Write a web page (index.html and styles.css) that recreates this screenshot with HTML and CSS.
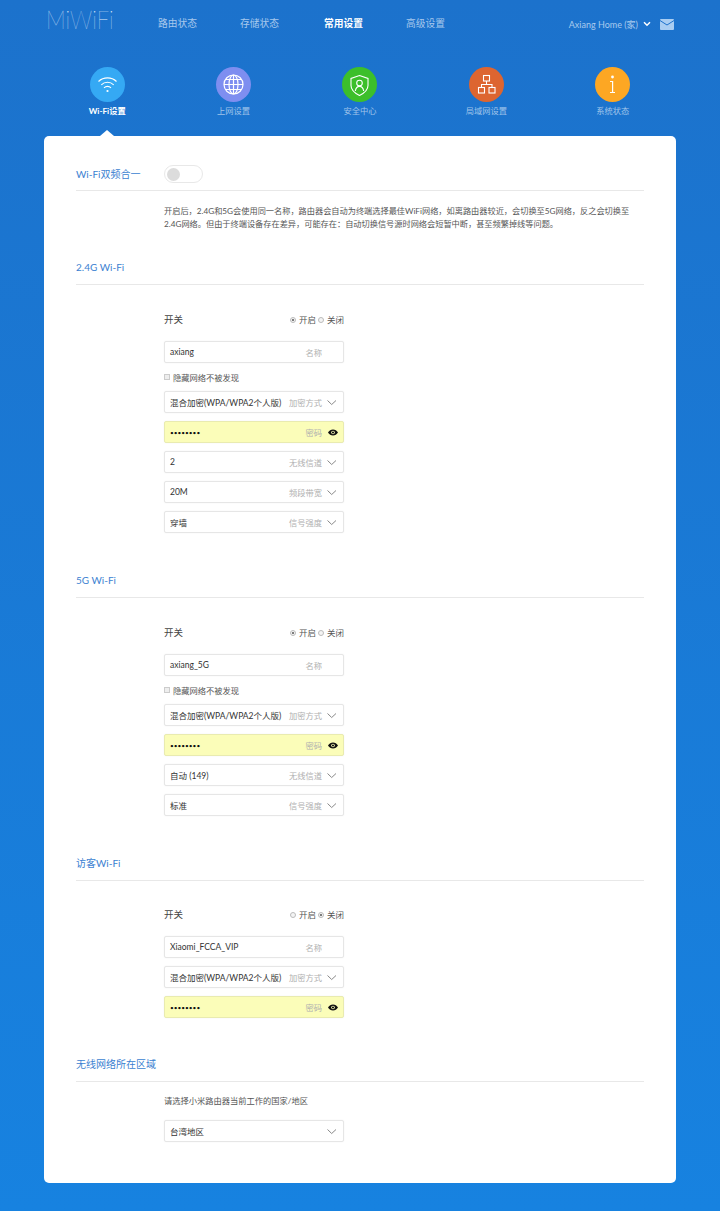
FILE: index.html
```html
<!DOCTYPE html>
<html lang="zh">
<head>
<meta charset="utf-8">
<title>MiWiFi</title>
<link rel="stylesheet" href="styles.css">
</head>
<body>
<header class="topbar">
  <div class="logo"><span>MiWiFi</span></div>
  <nav class="nav">
    <a>路由状态</a><a>存储状态</a><a class="active">常用设置</a><a>高级设置</a>
  </nav>
  <div class="user">
    <span>Axiang Home (家)</span>
    <svg class="user-chev" viewBox="0 0 8 6"><path d="M1 1.2 4 4.2 7 1.2" fill="none" stroke="#fff" stroke-width="1.5"/></svg>
    <svg class="mail" viewBox="0 0 14 11"><rect width="14" height="11" rx="1" fill="#a9cdf2"/><path d="M0 1.5 7 6 14 1.5" fill="none" stroke="#1c72cc" stroke-width="1"/></svg>
  </div>
</header>

<div class="tabs">
  <div class="tab current">
    <span class="disc c-wifi"><svg viewBox="0 0 35 35" fill="none" stroke="#fff" stroke-width="1.1"><path d="M8.5 14.5a13 13 0 0 1 18 0M11.3 17.8a9 9 0 0 1 12.4 0M14 20.8a5 5 0 0 1 7 0"/><circle cx="17.5" cy="24" r="1.1" fill="#fff" stroke="none"/></svg></span>
    <span class="tab-label">Wi-Fi设置</span>
  </div>
  <div class="tab">
    <span class="disc c-net"><svg viewBox="0 0 35 35" fill="none" stroke="#fff" stroke-width="1.2"><circle cx="17.5" cy="17.5" r="9.5"/><ellipse cx="17.5" cy="17.5" rx="4.5" ry="9.5"/><path d="M17.5 8v19M8 17.5h19M9.5 12.5h16M9.5 22.500h16"/></svg></span>
    <span class="tab-label">上网设置</span>
  </div>
  <div class="tab">
    <span class="disc c-sec"><svg viewBox="0 0 35 35" fill="none" stroke="#fff" stroke-width="1.1"><path d="M17.5 8.5 26 11.500v7c0 4.800-3.500 7.500-8.500 10-5-2.500-8.500-5.200-8.500-10v-7z"/><circle cx="17.5" cy="16" r="2.800"/><path d="M13.300 24c.6-3 2.200-4.600 4.200-4.600s3.600 1.600 4.200 4.600"/></svg></span>
    <span class="tab-label">安全中心</span>
  </div>
  <div class="tab">
    <span class="disc c-lan"><svg viewBox="0 0 35 35" fill="none" stroke="#fff" stroke-width="1.1"><rect x="14.500" y="8.500" width="6" height="5.500"/><rect x="9.500" y="20.500" width="6" height="5.500"/><rect x="20" y="20.500" width="6" height="5.500"/><path d="M17.500 14v3.500M12.500 20.500v-3h10.500v3"/></svg></span>
    <span class="tab-label">局域网设置</span>
  </div>
  <div class="tab">
    <span class="disc c-info"><svg viewBox="0 0 35 35" fill="#fff"><circle cx="17.500" cy="10" r="1.400"/><path d="M15 14h3.200v11h1.800v1.100h-5V25h2v-9.900h-2z"/></svg></span>
    <span class="tab-label">系统状态</span>
  </div>
</div>

<main class="card">
  <section class="head head-first">
    <h2 class="title">Wi-Fi双频合一</h2>
    <span class="toggle"><span class="knob"></span></span>
  </section>
  <p class="desc">开启后，2.4G和5G会使用同一名称，路由器会自动为终端选择最佳WiFi网络，如离路由器较近，会切换至5G网络，反之会切换至2.4G网络。但由于终端设备存在差异，可能存在：自动切换信号源时网络会短暂中断，甚至频繁掉线等问题。</p>

  <section class="head head-24"><h2 class="title">2.4G Wi-Fi</h2></section>
  <form class="form">
    <div class="switch-row"><span>开关</span><span class="radios"><i class="radio on"></i><span>开启</span><i class="radio"></i><span>关闭</span></span></div>
    <div class="field first"><span class="value">axiang</span><span class="hint">名称</span><span class="slot"></span></div>
    <label class="check"><i class="box"></i>隐藏网络不被发现</label>
    <div class="field"><span class="value">混合加密(WPA/WPA2个人版)</span><span class="hint">加密方式</span><svg class="slot" viewBox="0 0 12 7"><path d="M.5 1.500 4.700 5.500 9 1.500" fill="none" stroke="#888"/></svg></div>
    <div class="field pass"><span class="value dots">••••••••</span><span class="hint">密码</span><svg class="slot" viewBox="0 0 12 8"><path d="M0 4c1.500-2.400 3.500-3.600 6-3.600S10.500 1.600 12 4c-1.500 2.400-3.500 3.600-6 3.600S1.500 6.400 0 4z" fill="#111"/><circle cx="6" cy="4" r="2.200" fill="#fbfdb9"/><circle cx="6" cy="4" r="1.300" fill="#111"/></svg></div>
    <div class="field"><span class="value">2</span><span class="hint">无线信道</span><svg class="slot" viewBox="0 0 12 7"><path d="M.5 1.500 4.700 5.500 9 1.500" fill="none" stroke="#888"/></svg></div>
    <div class="field"><span class="value">20M</span><span class="hint">频段带宽</span><svg class="slot" viewBox="0 0 12 7"><path d="M.5 1.500 4.700 5.500 9 1.500" fill="none" stroke="#888"/></svg></div>
    <div class="field"><span class="value">穿墙</span><span class="hint">信号强度</span><svg class="slot" viewBox="0 0 12 7"><path d="M.5 1.500 4.700 5.500 9 1.500" fill="none" stroke="#888"/></svg></div>
  </form>

  <section class="head"><h2 class="title">5G Wi-Fi</h2></section>
  <form class="form">
    <div class="switch-row"><span>开关</span><span class="radios"><i class="radio on"></i><span>开启</span><i class="radio"></i><span>关闭</span></span></div>
    <div class="field first"><span class="value">axiang_5G</span><span class="hint">名称</span><span class="slot"></span></div>
    <label class="check"><i class="box"></i>隐藏网络不被发现</label>
    <div class="field"><span class="value">混合加密(WPA/WPA2个人版)</span><span class="hint">加密方式</span><svg class="slot" viewBox="0 0 12 7"><path d="M.5 1.500 4.700 5.500 9 1.500" fill="none" stroke="#888"/></svg></div>
    <div class="field pass"><span class="value dots">••••••••</span><span class="hint">密码</span><svg class="slot" viewBox="0 0 12 8"><path d="M0 4c1.500-2.400 3.500-3.600 6-3.600S10.500 1.600 12 4c-1.500 2.400-3.500 3.600-6 3.600S1.500 6.400 0 4z" fill="#111"/><circle cx="6" cy="4" r="2.200" fill="#fbfdb9"/><circle cx="6" cy="4" r="1.300" fill="#111"/></svg></div>
    <div class="field"><span class="value">自动 (149)</span><span class="hint">无线信道</span><svg class="slot" viewBox="0 0 12 7"><path d="M.5 1.500 4.700 5.500 9 1.500" fill="none" stroke="#888"/></svg></div>
    <div class="field"><span class="value">标准</span><span class="hint">信号强度</span><svg class="slot" viewBox="0 0 12 7"><path d="M.5 1.500 4.700 5.500 9 1.500" fill="none" stroke="#888"/></svg></div>
  </form>

  <section class="head"><h2 class="title">访客Wi-Fi</h2></section>
  <form class="form form-guest">
    <div class="switch-row"><span>开关</span><span class="radios"><i class="radio"></i><span>开启</span><i class="radio on"></i><span>关闭</span></span></div>
    <div class="field first"><span class="value">Xiaomi_FCCA_VIP</span><span class="hint">名称</span><span class="slot"></span></div>
    <div class="field"><span class="value">混合加密(WPA/WPA2个人版)</span><span class="hint">加密方式</span><svg class="slot" viewBox="0 0 12 7"><path d="M.5 1.500 4.700 5.500 9 1.500" fill="none" stroke="#888"/></svg></div>
    <div class="field pass"><span class="value dots">••••••••</span><span class="hint">密码</span><svg class="slot" viewBox="0 0 12 8"><path d="M0 4c1.500-2.400 3.500-3.600 6-3.600S10.500 1.600 12 4c-1.500 2.400-3.500 3.600-6 3.600S1.500 6.400 0 4z" fill="#111"/><circle cx="6" cy="4" r="2.200" fill="#fbfdb9"/><circle cx="6" cy="4" r="1.300" fill="#111"/></svg></div>
  </form>

  <section class="head head-region"><h2 class="title">无线网络所在区域</h2></section>
  <form class="form form-region">
    <div class="region-label">请选择小米路由器当前工作的国家/地区</div>
    <div class="field first"><span class="value">台湾地区</span><svg class="slot" viewBox="0 0 12 7"><path d="M.5 1.500 4.700 5.500 9 1.500" fill="none" stroke="#888"/></svg></div>
  </form>
</main>
</body>
</html>
```
FILE: styles.css
```css
* { box-sizing: border-box; }
html, body { margin: 0; padding: 0; }
body {
  width: 720px;
  height: 1211px;
  overflow: hidden;
  background: linear-gradient(180deg, #1c72cc 0%, #1782e0 100%);
  font-family: Lato, "Noto Sans CJK SC", sans-serif;
  font-size: 8.25px;
  color: #333;
}

.topbar {
  display: flex;
  align-items: center;
  height: 48px;
  padding: 0 46px 0 46px;
}
.logo {
  width: 112px;
  margin-bottom: 11px;
  font-family: Lato, sans-serif;
  font-weight: 100;
  font-size: 26px;
  line-height: 26px;
  color: #e4f0fc;
}
.logo span { display: block; transform: scaleX(.85); transform-origin: left center; }
.nav { display: flex; gap: 43px; margin-bottom: 3px; font-size: 9.75px; color: #a7c8ec; }
.nav .active { margin-left: 2px; color: #fff; font-weight: 700; }
.user { display: flex; align-items: center; margin-left: auto; font-size: 9px; color: #a9cbee; }
.user-chev { width: 8px; height: 6px; margin-left: 5px; }
.mail { width: 14px; height: 11px; margin-left: 9px; }

.tabs {
  display: grid;
  grid-template-columns: repeat(5, 1fr);
  width: 632px;
  height: 88px;
  margin-left: 44px;
  padding-top: 19px;
}
.tab { position: relative; display: flex; flex-direction: column; align-items: center; }
.disc { width: 35px; height: 35px; border-radius: 50%; }
.disc svg { display: block; width: 35px; height: 35px; }
.c-wifi { background: #35a9f4; }
.c-net { background: #7e8ef0; }
.c-sec { background: #3cbf2a; }
.c-lan { background: #dd6530; }
.c-info { background: #fda723; }
.tab-label { margin-top: 3px; font-size: 8.25px; line-height: 13px; color: #a0c4ea; }
.current .tab-label { color: #fff; font-weight: 700; }
.current::after {
  content: "";
  position: absolute;
  left: 50%;
  bottom: 0;
  margin-left: -7px;
  border: solid transparent;
  border-width: 0 7px 6px;
  border-bottom-color: #fff;
}

.card {
  width: 632px;
  height: 1047px;
  margin-left: 44px;
  padding: 0 32px;
  background: #fff;
  border-radius: 5px;
}
.head {
  margin-top: 40px;
  padding-bottom: 10px;
  border-bottom: 1px solid #e8e8e8;
}
.head-first {
  display: flex;
  align-items: center;
  margin-top: 0;
  padding-top: 29px;
  padding-bottom: 7px;
}
.head-24 { margin-top: 29px; }
.head-region { margin-top: 39px; }
.title { margin: 0; font-size: 10px; font-weight: 400; line-height: 14px; color: #3b7fd1; }
.head-first .title { width: 88px; }
.toggle { display: block; width: 39px; height: 18px; padding: 2px; border: 1px solid #e8e8e8; border-radius: 9px; }
.knob { display: block; width: 13px; height: 13px; border-radius: 50%; background: #dcdcdc; }
.desc { width: 472px; margin: 14px 0 0 88px; font-size: 8.2px; line-height: 13px; color: #555; }

.form { width: 180px; margin: 28px 0 0 88px; }
.form-guest { margin-top: 27px; }
.form-region { margin-top: 12px; }
.switch-row { display: flex; justify-content: space-between; font-size: 9.5px; line-height: 14px; color: #444; }
.radios { display: flex; align-items: center; font-size: 8.5px; color: #555; }
.radio { position: relative; width: 6px; height: 6px; margin: 0 3px 0 2px; border: 1px solid #bbb; border-radius: 50%; background: #f4f4f4; }
.radio.on::after { content: ""; position: absolute; inset: 1px; border-radius: 50%; background: #555; }
.field {
  display: flex;
  align-items: center;
  height: 22px;
  margin-top: 8px;
  padding: 0 4px 0 5px;
  background: #fff;
  border: 1px solid #e6e6e6;
  border-radius: 2px;
  box-shadow: 0 0 2px rgba(0, 0, 0, .05);
  color: #333;
}
.field.first { margin-top: 14px; }
.form-region .field.first { margin-top: 12px; }
.pass { background: #fbfdb9; border-color: #e9ebb0; }
.value { flex: 1; font-size: 8.5px; white-space: nowrap; }
.dots { font-size: 6.5px; color: #111; }
.hint { font-size: 8.25px; color: #b0b0b0; white-space: nowrap; }
.slot { flex: none; width: 12px; height: 7px; margin-left: 5px; }
.pass .slot { width: 10px; height: 7px; margin-left: 6px; margin-right: 1px; }
.check { display: flex; align-items: center; height: 12px; margin-top: 8px; font-size: 8.25px; color: #555; }
.box { width: 6px; height: 6px; margin-right: 3px; border: 1px solid #ccc; background: #eee; }
.region-label { font-size: 8.25px; line-height: 14px; color: #555; }
```
